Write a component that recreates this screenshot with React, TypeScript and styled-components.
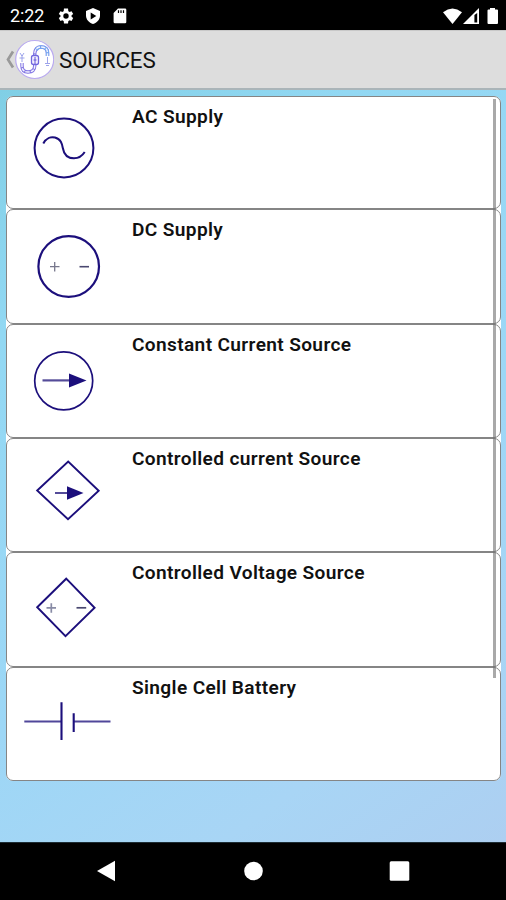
import React from 'react';
import styled, { createGlobalStyle } from 'styled-components';

const GlobalStyle = createGlobalStyle`
  * { box-sizing: border-box; }
  body { margin: 0; background: #000; }
`;

const INK = '#1c0f7c';

const Screen = styled.div`
  width: 506px;
  height: 900px;
  display: flex;
  flex-direction: column;
  overflow: hidden;
  font-family: Roboto, 'Liberation Sans', sans-serif;
`;

const StatusBar = styled.header`
  height: 30px;
  flex: none;
  display: flex;
  align-items: center;
  justify-content: space-between;
  padding: 2px 7px 0 10px;
  background: #000;
  color: #fff;
`;

const StatusGroup = styled.div<{ $gap: number }>`
  display: flex;
  align-items: center;
  gap: ${(p) => p.$gap}px;
  svg { display: block; }
`;

const Clock = styled.span`
  width: 35px;
  margin-right: 3px;
  font-size: 18px;
  line-height: 28px;
  font-weight: 400;
  letter-spacing: -0.1px;
  white-space: nowrap;
`;

const TitleBar = styled.div`
  height: 60px;
  flex: none;
  display: flex;
  align-items: center;
  padding-left: 5px;
  background: #dddddd;
  border-top: 1px solid #c8c8c8;
  border-bottom: 2px solid #aab4b8;
  svg { display: block; flex: none; }
`;

const Title = styled.h1`
  margin: 1px 0 0 5px;
  font-size: 22.4px;
  line-height: 28px;
  font-weight: 400;
  letter-spacing: -0.15px;
  color: #111;
`;

const Content = styled.main`
  flex: 1;
  padding: 6px 5px 0 6px;
  background: linear-gradient(145deg, #80cfe5 0%, #92d8f3 22%, #9dd7f6 58%, #a8d5f5 82%, #adcff1 100%);
`;

const List = styled.div`
  position: relative;
  height: 685px;
  display: grid;
  grid-template-rows: 113px 115px 114px 114px 115px 114px;
  border-radius: 7px;
  background: #fff;
`;

const Card = styled.article`
  display: flex;
  border: 1px solid #858585;
  border-radius: 7px;
  background: #fff;
`;

const Symbol = styled.svg`
  width: 118px;
  height: 112px;
  flex: none;
  fill: none;
  stroke: ${INK};
  stroke-width: 2;
`;

const Label = styled.h2`
  margin: 7px 0 0 7px;
  font-size: 19.1px;
  line-height: 26px;
  font-weight: 600;
  letter-spacing: 0.36px;
  color: #111;
  white-space: nowrap;
`;

const ScrollThumb = styled.div`
  position: absolute;
  top: 3px;
  right: 5px;
  width: 3px;
  height: 579px;
  background: rgba(112, 112, 112, 0.6);
`;

const NavBar = styled.nav`
  height: 58px;
  flex: none;
  display: flex;
  align-items: center;
  justify-content: space-between;
  padding: 0 96px 1px 96px;
  background: #000;
  border-top: 1px solid #1d2c33;
  svg { display: block; fill: #fff; }
`;

const sources = [
  {
    name: 'AC Supply',
    originY: 1,
    drawing: (
      <>
        <circle cx="58" cy="52" r="29.4" />
        <path d="M37.3 47.5C40 42 45 40.5 49 41.5C55 43 56 48 56.8 52C58 59 62 62.3 68 62.3C73 62.3 76.5 59.5 78.7 56" />
      </>
    ),
  },
  {
    name: 'DC Supply',
    originY: 0,
    drawing: (
      <>
        <circle cx="62.7" cy="56.5" r="30.3" strokeWidth="2.2" />
        <path d="M44 56.7h9.5M48.7 52v9.5" strokeWidth="1.3" stroke="#77778c" />
        <path d="M73.5 56.7h9.5" strokeWidth="1.6" stroke="#4a4870" />
      </>
    ),
  },
  {
    name: 'Constant Current Source',
    originY: 1,
    drawing: (
      <>
        <circle cx="57.7" cy="56.8" r="29" strokeWidth="1.7" />
        <path d="M36.5 56.4H64" strokeWidth="2.2" stroke="#554c99" />
        <path d="M63 49.4L80.5 56.4L63 63.4Z" fill={INK} stroke="none" />
      </>
    ),
  },
  {
    name: 'Controlled current Source',
    originY: 0,
    drawing: (
      <>
        <path d="M31.2 51.5L62.2 22.5L92.7 51.8L62 80.3Z" strokeWidth="1.9" />
        <path d="M49 54H62" strokeWidth="2" stroke="#554c99" />
        <path d="M61 47.3L77.5 54L61 60.7Z" fill={INK} stroke="none" />
      </>
    ),
  },
  {
    name: 'Controlled Voltage Source',
    originY: 0,
    drawing: (
      <>
        <path d="M31.2 54.2L60.2 25.7L88.6 54.8L59.5 83.2Z" strokeWidth="1.9" />
        <path d="M40.5 54.9h9.5M45.3 50.2v9.5" strokeWidth="1.7" stroke="#888ba5" />
        <path d="M70.5 54.8h9.7" strokeWidth="1.7" stroke="#4a4870" />
      </>
    ),
  },
  {
    name: 'Single Cell Battery',
    originY: 1,
    drawing: (
      <>
        <path d="M18.3 54.5H55.5M67.7 54.5H104.5" stroke="#50479a" />
        <path d="M55.5 35.3V73M67.7 46.3V65" strokeWidth="2.1" />
      </>
    ),
  },
];

function StatusIcons() {
  return (
    <StatusGroup $gap={9}>
      <Clock>2:22</Clock>
      <svg width="18" height="18" viewBox="0 0 24 24" fill="#fff">
        <path fillRule="evenodd" d="M19.4 13a8 8 0 0 0 0-2l2.2-1.7-2.2-3.8-2.6 1a8 8 0 0 0-1.7-1L14.7 2H9.3l-.4 3.5a8 8 0 0 0-1.7 1l-2.6-1-2.2 3.8L4.6 11a8 8 0 0 0 0 2l-2.2 1.7 2.2 3.8 2.6-1a8 8 0 0 0 1.7 1l.4 3.5h5.4l.4-3.5a8 8 0 0 0 1.7-1l2.6 1 2.2-3.8zM12 15.6a3.6 3.6 0 1 1 0-7.2 3.6 3.6 0 0 1 0 7.2z" />
      </svg>
      <svg width="18" height="18" viewBox="0 0 18 18">
        <path fill="#fff" d="M9 1L16 4V8.5C16 12.5 13 15.8 9 17C5 15.8 2 12.5 2 8.5V4Z" />
        <path fill="#000" d="M6.7 5.5L12.3 9L6.7 12.5Z" />
      </svg>
      <svg width="18" height="18" viewBox="0 0 18 18">
        <path fill="#fff" d="M7 1.5H14Q15.3 1.5 15.3 2.8V15Q15.3 16.3 14 16.3H4Q2.6 16.3 2.6 15V6Z" />
        <path stroke="#000" strokeWidth="1.2" d="M7.5 3.3V6M10 3.3V6M12.5 3.3V6" />
      </svg>
    </StatusGroup>
  );
}

function ConnectionIcons() {
  return (
    <StatusGroup $gap={0}>
      <svg width="64" height="18" viewBox="0 0 64 18" fill="#fff">
        <path d="M8 5.2Q17.5-2.2 27 5.2L17.5 17Z" />
        <path fillRule="evenodd" d="M28 17L44 1V17ZM39.4 8V15.5H42.2V6Z" />
        <path d="M55 1H60V2.5H62Q63 2.5 63 3.5V16Q63 17 62 17H53.5Q52.5 17 52.5 16V3.5Q52.5 2.5 53.5 2.5H55Z" />
      </svg>
    </StatusGroup>
  );
}

function AppLogo() {
  return (
    <svg width="49" height="42" viewBox="0 0 49 42" fill="none">
      <path d="M8 12.5L3 20.5L8 28.5" stroke="#999" strokeWidth="2.7" />
      <circle cx="29.7" cy="20.5" r="19" fill="#fff" stroke="#b9aaf0" strokeWidth="1.2" />
      <g strokeWidth="3.4">
        <path d="M17 24V27Q17 33 23 33Q29.5 33 29.7 27V15Q30 8 36 8Q42.5 8 42.5 14V17" stroke="#8276e3" />
        <path d="M31 11Q33 8 36 8Q42.5 8 42.5 14V17" stroke="#75a5ef" />
      </g>
      <path d="M17 24V27Q17 33 23 33Q29.5 33 29.7 27V15Q30 8 36 8Q42.5 8 42.5 14V17" stroke="#f5f5ff" strokeWidth="1.4" strokeDasharray="4 1" />
      <rect x="26.5" y="16.5" width="7" height="9" rx="2" fill="#f4f1ff" stroke="#7268df" strokeWidth="1.3" />
      <path d="M30 18V25M28.5 21H31.5" stroke="#6554d8" />
      <path d="M17 23V16M14.5 19H19.5M15 14L17 17L19 14M42.5 18V24M40 24.5H45M41 26.5H44" stroke="#929ae9" strokeWidth="0.9" />
    </svg>
  );
}

export default function App() {
  return (
    <>
      <GlobalStyle />
      <Screen>
        <StatusBar>
          <StatusIcons />
          <ConnectionIcons />
        </StatusBar>
        <TitleBar>
          <AppLogo />
          <Title>SOURCES</Title>
        </TitleBar>
        <Content>
          <List>
            {sources.map((source) => (
              <Card key={source.name}>
                <Symbol viewBox={`1 ${source.originY} 118 112`}>{source.drawing}</Symbol>
                <Label>{source.name}</Label>
              </Card>
            ))}
            <ScrollThumb />
          </List>
        </Content>
        <NavBar>
          <svg width="20" height="22" viewBox="0 0 20 22"><path d="M1 11L19 .7V21.3Z" /></svg>
          <svg width="20" height="20" viewBox="0 0 20 20"><circle cx="10.5" cy="10" r="9.3" /></svg>
          <svg width="21" height="20" viewBox="0 0 21 20"><rect x=".7" y=".3" width="19.6" height="19.4" rx="1.5" /></svg>
        </NavBar>
      </Screen>
    </>
  );
}
